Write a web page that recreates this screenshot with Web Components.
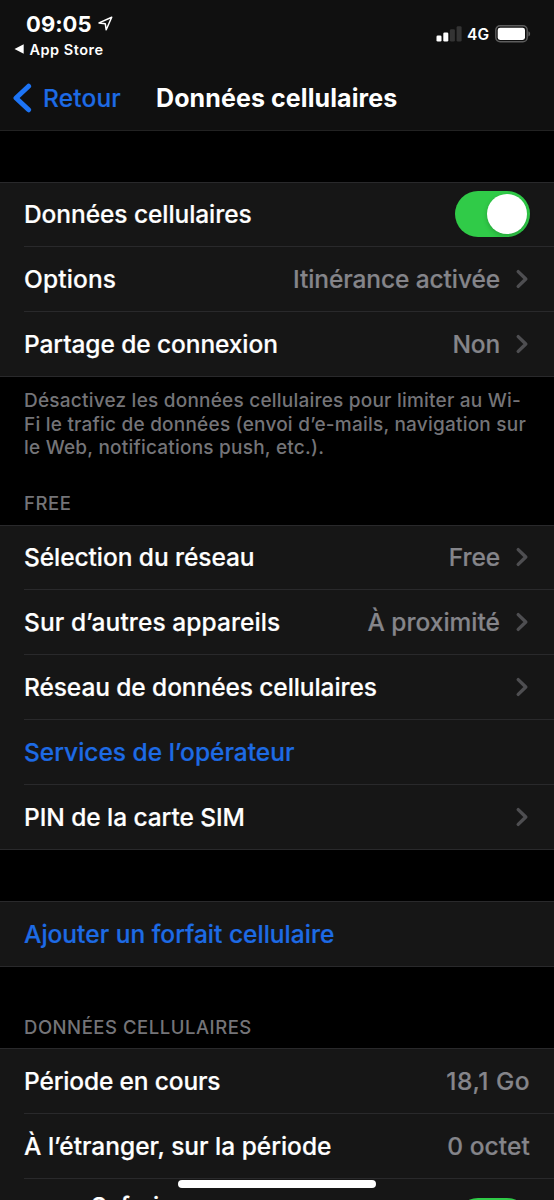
<!DOCTYPE html>
<html lang="fr">
<head>
<meta charset="utf-8">
<title>Données cellulaires</title>
<style>
html,body{margin:0;height:1200px;overflow:hidden;background:#000}
body{font-family:Inter,"Liberation Sans",sans-serif;color:#fff}
</style>
</head>
<body>
<settings-screen></settings-screen>
<script>
const define = (name, html) => {
  const t = document.createElement('template');
  t.innerHTML = html;
  customElements.define(name, class extends HTMLElement {
    constructor() {
      super();
      this.attachShadow({mode: 'open'}).append(t.content.cloneNode(true));
    }
  });
};

define('status-bar', `
<style>
:host{display:flex;justify-content:space-between;height:65px;box-sizing:border-box;padding:11px 23px 0 14px}
.time{display:flex;align-items:center;gap:6px;height:25px;padding-left:12px;font-weight:700;font-size:22px;letter-spacing:.05px}
.back{display:flex;align-items:center;gap:5.5px;height:20px;margin-top:3px;font-weight:600;font-size:14.5px;letter-spacing:.5px}
.right{display:flex;align-items:center;height:20px;margin-top:13px;font-weight:600;font-size:15.5px}
.right span{margin:0 6px 0 5px}
svg{display:block}
</style>
<div>
  <div class="time"><span>09:05</span>
    <svg width="15" height="15" viewBox="0 0 15 15" fill="none" stroke="#fff" stroke-width="1.5" stroke-linejoin="round"><path d="M13.7 1.2 1 6.9l6.3.9.9 6z"/></svg>
  </div>
  <div class="back"><svg width="10" height="10" viewBox="0 0 10 10"><path d="M.5 5 9.7.3v9.4z" fill="#fff"/></svg><span>App Store</span></div>
</div>
<div class="right">
  <svg width="26" height="16" viewBox="0 0 26 16"><g fill="#fff"><rect x=".5" y="9.5" width="5" height="6" rx="1.3"/><rect x="7.3" y="6.5" width="5" height="9" rx="1.3"/></g><g fill="#343434"><rect x="13.9" y="3.3" width="5" height="12.2" rx="1.3"/><rect x="20.6" y=".3" width="5" height="15.2" rx="1.3"/></g></svg>
  <span>4G</span>
  <svg width="36" height="18" viewBox="0 0 36 18"><rect x=".8" y=".8" width="31.4" height="16" rx="4.3" fill="none" stroke="#5d5d5d" stroke-width="1.4"/><rect x="2.7" y="2.7" width="27.3" height="12.2" rx="2.4" fill="#fff"/><path d="M33.4 6.2c2.3.9 2.3 4.4 0 5.3z" fill="#5d5d5d"/></svg>
</div>`);

define('nav-bar', `
<style>
:host{display:flex;align-items:center;height:65px;padding-left:13px;color:#fff}
.back{display:flex;align-items:center;gap:11px;width:143px;color:#1d6be5;font-weight:500;font-size:24.5px;letter-spacing:.15px;-webkit-text-stroke:.15px}
svg{display:block}
h1{margin:0;font-size:25px;font-weight:700;letter-spacing:.1px;white-space:nowrap}
</style>
<div class="back"><svg width="19" height="30" viewBox="0 0 19 30"><path d="M15.6 3.2 3 15 15.6 26.8" fill="none" stroke="#1d74f5" stroke-width="5" stroke-linecap="round" stroke-linejoin="round"/></svg><slot name="back"></slot></div>
<h1><slot></slot></h1>`);

define('disclosure-icon', `
<style>:host{display:block;margin-left:15px;margin-right:1px}svg{display:block}</style>
<svg width="14" height="20" viewBox="0 0 14 20"><path d="M3.2 2.6 10.8 10 3.2 17.4" fill="none" stroke="#4e4e51" stroke-width="3.4" stroke-linecap="round" stroke-linejoin="round"/></svg>`);

define('toggle-switch', `
<style>
:host{display:flex;box-sizing:border-box;justify-content:flex-end;width:75px;height:46px;padding:3px;border-radius:23px;background:#30cb48}
i{width:40px;height:40px;border-radius:50%;background:#fff;box-shadow:0 2px 5px #0003}
</style><i></i>`);

define('setting-row', `
<style>
:host{display:block;height:65px;padding-left:24px}
.in{display:flex;align-items:center;box-sizing:border-box;height:65px;padding-right:24px;border-bottom:1px solid #29292b;white-space:nowrap;font-size:24.5px;font-weight:500;-webkit-text-stroke:.2px;letter-spacing:var(--ls,-.07px)}
:host(:last-child) .in{border-color:transparent}
:host([link]) .in{color:#1d6be5}
:host([app]) .in{padding-left:67px;height:85px}
:host([app]) .label{align-self:flex-start;padding-top:12px}
.label{flex:1}
.value{color:#85858a;letter-spacing:var(--vs,-.1px)}
</style>
<div class="in"><span class="label"><slot></slot></span><span class="value"><slot name="value"></slot></span><slot name="end"></slot></div>`);

define('setting-group', `
<style>
:host{display:block;box-sizing:border-box;background:#161616;box-shadow:inset 0 1px #29292b,inset 0 -1px #29292b}
</style><slot></slot>`);

define('group-note', `
<style>
:host{display:block;padding:12px 24px 0;height:72px;font-size:19px;line-height:23.7px;font-weight:500;color:#747478;letter-spacing:.22px;white-space:nowrap}
</style><slot></slot>`);

define('group-title', `
<style>
:host{display:block;box-sizing:border-box;padding-left:24px;line-height:24px;font-size:18.5px;font-weight:500;color:#747478;letter-spacing:.53px}
</style><slot></slot>`);

define('home-indicator', `
<style>:host{position:absolute;left:178px;top:1180px;width:198px;height:8px;border-radius:4px;background:#fff}</style>`);

define('settings-screen', `
<style>
:host{display:block;position:relative;width:554px;height:1200px;overflow:hidden;background:#000}
header{background:#101010;border-bottom:1px solid #222}
main{display:flex;flex-direction:column}
.g1{margin-top:51px}
.t2{margin-top:30px;margin-bottom:10px}
.g3{margin-top:51px}
.g3,.g4{padding-top:1px}
.t4{margin-top:48px;margin-bottom:9px}
</style>
<header><status-bar></status-bar><nav-bar><span slot="back">Retour</span>Données cellulaires</nav-bar></header>
<main>
<setting-group class="g1">
  <setting-row>Données cellulaires<toggle-switch slot="end"></toggle-switch></setting-row>
  <setting-row style="--ls:.15px;--vs:-.1px">Options<span slot="value">Itinérance activée</span><disclosure-icon slot="end"></disclosure-icon></setting-row>
  <setting-row style="--ls:-.09px;--vs:-.2px">Partage de connexion<span slot="value">Non</span><disclosure-icon slot="end"></disclosure-icon></setting-row>
</setting-group>
<group-note>Désactivez les données cellulaires pour limiter au Wi-<br>Fi le trafic de données (envoi d’e-mails, navigation sur<br>le Web, notifications push, etc.).</group-note>
<group-title class="t2">FREE</group-title>
<setting-group>
  <setting-row>Sélection du réseau<span slot="value">Free</span><disclosure-icon slot="end"></disclosure-icon></setting-row>
  <setting-row style="--ls:.08px;--vs:0px">Sur d’autres appareils<span slot="value">À proximité</span><disclosure-icon slot="end"></disclosure-icon></setting-row>
  <setting-row style="--ls:-.09px">Réseau de données cellulaires<disclosure-icon slot="end"></disclosure-icon></setting-row>
  <setting-row link style="--ls:0px">Services de l’opérateur</setting-row>
  <setting-row>PIN de la carte SIM<disclosure-icon slot="end"></disclosure-icon></setting-row>
</setting-group>
<setting-group class="g3"><setting-row link style="--ls:.01px">Ajouter un forfait cellulaire</setting-row></setting-group>
<group-title class="t4">DONNÉES CELLULAIRES</group-title>
<setting-group class="g4">
  <setting-row style="--ls:-.15px;--vs:.5px">Période en cours<span slot="value">18,1 Go</span></setting-row>
  <setting-row style="--ls:-.01px;--vs:.1px">À l’étranger, sur la période<span slot="value">0 octet</span></setting-row>
  <setting-row app>Safari<toggle-switch slot="end"></toggle-switch></setting-row>
</setting-group>
</main>
<home-indicator></home-indicator>`);
</script>
</body>
</html>
